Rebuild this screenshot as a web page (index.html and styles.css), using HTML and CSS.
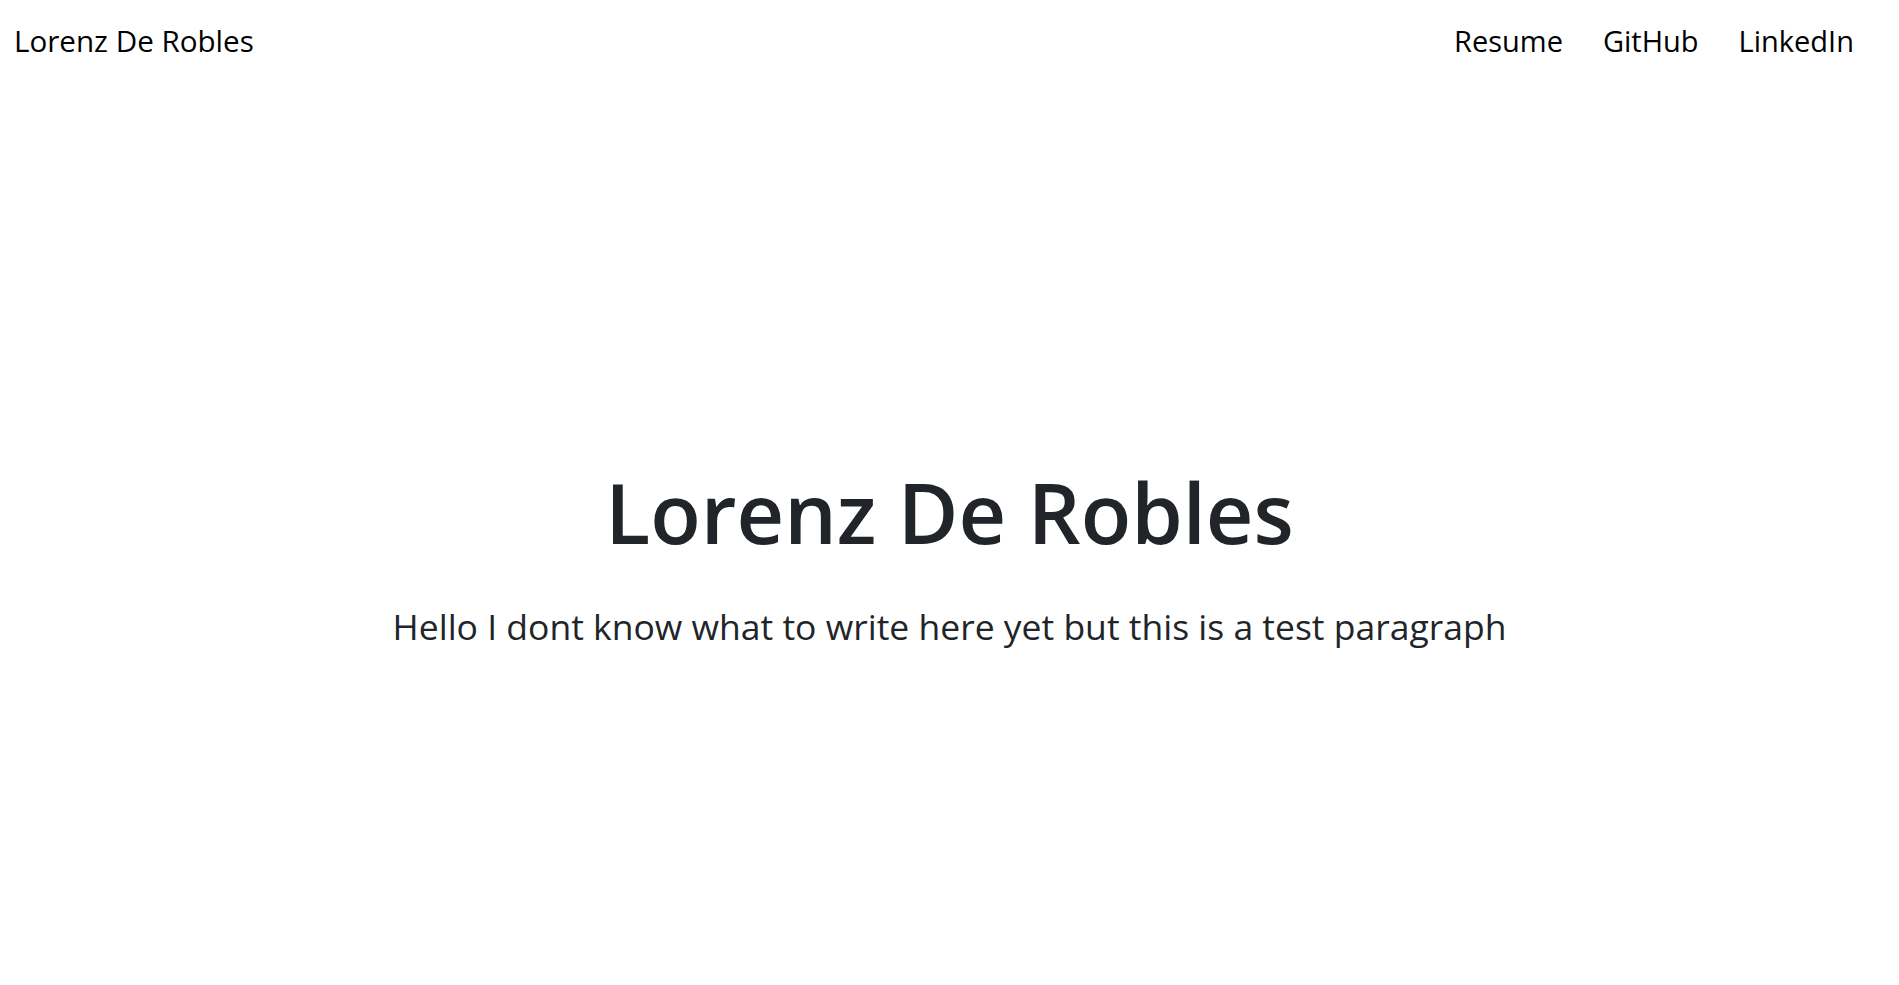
FILE: index.html
```html
<!DOCTYPE html>
<html lang="en">
<head>
<meta charset="utf-8">
<title>Lorenz De Robles</title>
<link rel="stylesheet" href="styles.css">
</head>
<body>
<nav class="navbar">
  <a class="brand" href="#">Lorenz De Robles</a>
  <ul class="nav-links">
    <li><a class="nav-link" href="#">Resume</a></li>
    <li><a class="nav-link" href="#">GitHub</a></li>
    <li><a class="nav-link" href="#">LinkedIn</a></li>
  </ul>
</nav>
<main class="hero">
  <h1 class="hero-title">Lorenz De Robles</h1>
  <p class="hero-lead">Hello I dont know what to write here yet but this is a test paragraph</p>
</main>
</body>
</html>
```
FILE: styles.css
```css
html, body {
  margin: 0;
  padding: 0;
  background: #fff;
}
body {
  font-family: "Open Sans", "Noto Sans", sans-serif;
  color: #212529;
}
.navbar {
  display: flex;
  justify-content: space-between;
  align-items: center;
  height: 43.5px;
  padding: 19px 45px 19px 14px;
}
.brand {
  font-size: 29.6px;
  line-height: 43.5px;
  color: #000;
  text-decoration: none;
}
.nav-links {
  display: flex;
  list-style: none;
  margin: 0;
  padding: 0;
}
.nav-link {
  display: block;
  padding: 0 20px;
  font-size: 29px;
  line-height: 43.5px;
  color: #000;
  text-decoration: none;
}
.nav-links li:last-child .nav-link {
  padding-right: 0;
}
.hero {
  display: flex;
  flex-direction: column;
  align-items: center;
  text-align: center;
  padding-top: 380.7px;
}
.hero-title {
  margin: 0 0 38px;
  font-size: 82.8px;
  font-weight: 600;
  line-height: 1.2;
  color: #212529;
}
.hero-lead {
  margin: 0;
  font-size: 35.5px;
  font-weight: 400;
  line-height: 1.5;
  color: #212529;
}
```
